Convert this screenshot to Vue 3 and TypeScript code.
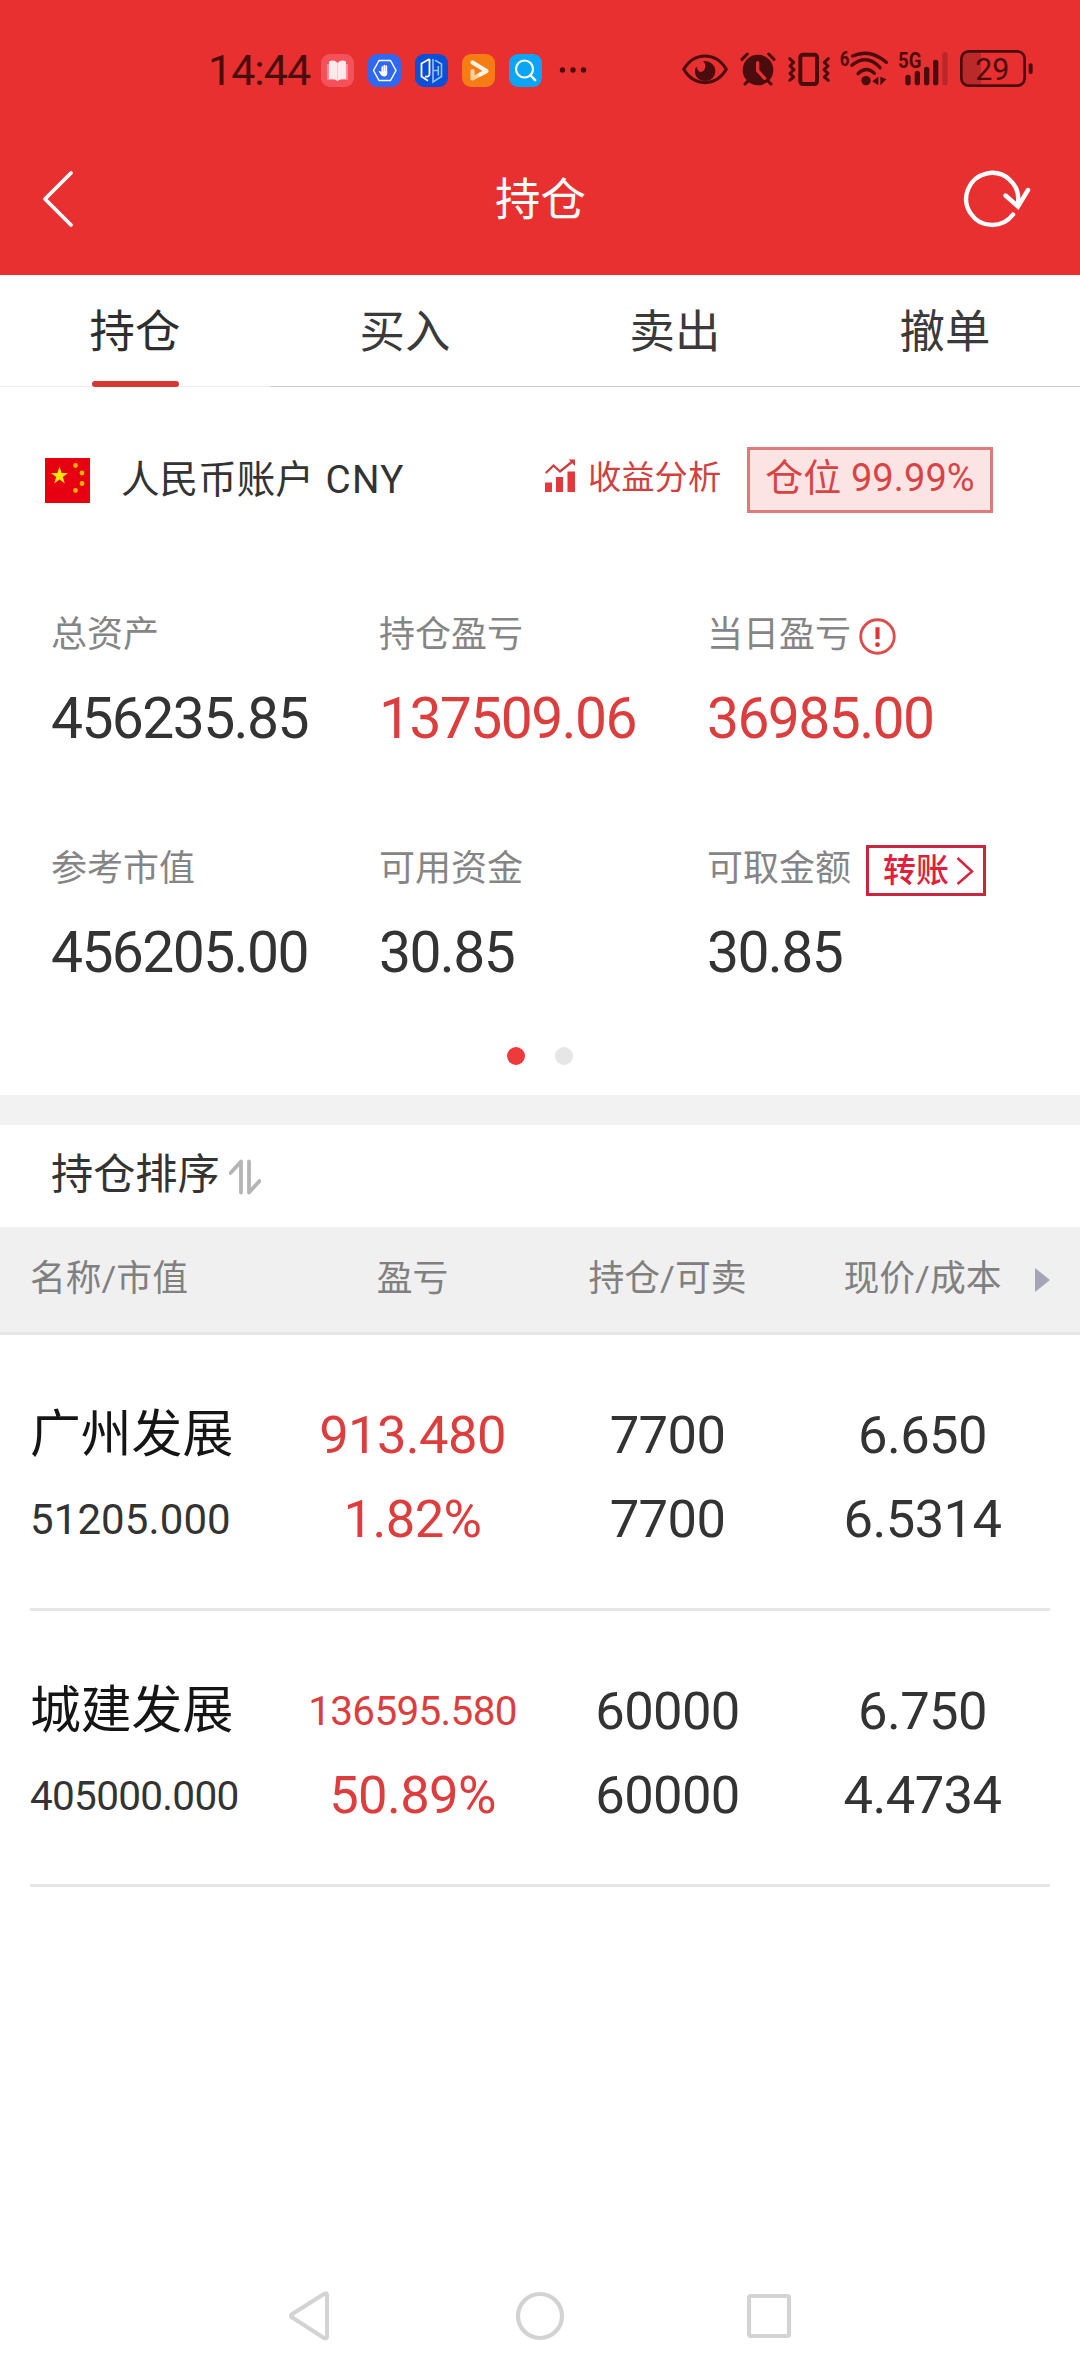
<script setup lang="ts">
interface Metric {
  label: string
  value: string
  up?: boolean
  extra?: 'info' | 'transfer'
}

interface Holding {
  name: string
  marketValue: string
  profit: string
  rate: string
  amount: string
  sellable: string
  price: string
  cost: string
}

const tabs: string[] = ['持仓', '买入', '卖出', '撤单']

const metrics: Metric[] = [
  { label: '总资产', value: '456235.85' },
  { label: '持仓盈亏', value: '137509.06', up: true },
  { label: '当日盈亏', value: '36985.00', up: true, extra: 'info' },
  { label: '参考市值', value: '456205.00' },
  { label: '可用资金', value: '30.85' },
  { label: '可取金额', value: '30.85', extra: 'transfer' },
]

const holdings: Holding[] = [
  {
    name: '广州发展',
    marketValue: '51205.000',
    profit: '913.480',
    rate: '1.82%',
    amount: '7700',
    sellable: '7700',
    price: '6.650',
    cost: '6.5314',
  },
  {
    name: '城建发展',
    marketValue: '405000.000',
    profit: '136595.580',
    rate: '50.89%',
    amount: '60000',
    sellable: '60000',
    price: '6.750',
    cost: '4.4734',
  },
]
</script>

<template>
  <div class="screen">
    <header class="top">
      <div class="status">
        <span class="clock">14:44</span>
        <div class="apps">
          <svg viewBox="0 0 33 33" class="app">
            <rect width="33" height="33" rx="9" fill="#f5515a" />
            <path d="M6 10h21v16H6z" fill="#fb8d92" />
            <path d="M8 7.500q5-2.500 8.500 1.500q3.500-4 8.500-1.500V25q-5-1-8.500 2q-3.500-3-8.500-2z" fill="#fdeaea" />
            <path d="M16.500 9V27" stroke="#f7cfd1" stroke-width="1" />
          </svg>
          <svg viewBox="0 0 33 33" class="app">
            <rect width="33" height="33" rx="9" fill="#2f68f2" />
            <path d="M11 6.500h11.500L28 16.500l-5.500 10H11l-5.500-10z" fill="none" stroke="#fff" stroke-width="1.500" stroke-linejoin="round" />
            <path d="M14.300 13v6M16.300 11.500v7M18.300 12v7" stroke="#fff" stroke-width="1.700" stroke-linecap="round" />
            <path d="M13.400 17.500h5.800v3q-.6 2-3 2q-2.500 0-3.600-2l-2-3.200q1-.9 2.800.9z" fill="#fff" />
          </svg>
          <svg viewBox="0 0 33 33" class="app">
            <rect width="33" height="33" rx="9" fill="#0a4fd8" />
            <path d="M14.500 5L6.500 9.500V22.500L13 26.800M14.500 5V20q0 3.200-4.500 2.500" fill="none" stroke="#fff" stroke-width="1.800" />
            <path d="M18 5V28L26.500 22.500V10L20 6.200M18 16.500h5.500M23.300 12v9.500" fill="none" stroke="#8fc2ff" stroke-width="1.600" />
          </svg>
          <svg viewBox="0 0 33 33" class="app">
            <rect width="33" height="33" rx="9" fill="#f67d13" />
            <path d="M10.500 17v7.500L24 17.500" fill="none" stroke="#ffcf9d" stroke-width="4.200" stroke-linecap="round" stroke-linejoin="round" />
            <path d="M10.500 8.500L24.500 17L18 20.500" fill="none" stroke="#fff4e6" stroke-width="4.200" stroke-linecap="round" stroke-linejoin="round" />
          </svg>
          <svg viewBox="0 0 33 33" class="app">
            <rect width="33" height="33" rx="9" fill="#0ca5f5" />
            <circle cx="15.500" cy="15" r="8.500" fill="none" stroke="#fff" stroke-width="2.200" />
            <path d="M21.500 21.500l4.700 4.700" stroke="#fff" stroke-width="2.400" stroke-linecap="round" />
          </svg>
        </div>
        <svg class="more" viewBox="0 0 28 8">
          <circle cx="3.500" cy="4" r="2.700" />
          <circle cx="14" cy="4" r="2.700" />
          <circle cx="24.500" cy="4" r="2.700" />
        </svg>

        <div class="system">
          <svg viewBox="60 48 150 144" width="50" height="48">
            <path d="M71 118C86 93 110 78 135 78S184 93 199 118C184 143 160 158 135 158S86 143 71 118Z" fill="none" stroke="#4b0c0e" stroke-width="9" />
            <path d="M129 93C150 91 166 105 166 123C166 141 152 153 136 153C118 153 104 141 105 123C105 117 107 113 110 110C112 123 121 129 128 124C138 118 139 102 129 93Z" fill="#4b0c0e" />
          </svg>
          <svg viewBox="237 48 114 144" width="38" height="48">
            <path d="M246 88L262 72M342 88L326 72M255 162L266 151M333 162L322 151" stroke="#4b0c0e" stroke-width="9" stroke-linecap="round" />
            <circle cx="294" cy="120" r="46" fill="#4b0c0e" />
            <path d="M293 98V122L314 145" fill="none" stroke="#e83030" stroke-width="10" stroke-linecap="round" />
          </svg>
          <svg viewBox="378 48 138 144" width="46" height="48">
            <rect x="421" y="74" width="50" height="88" rx="8" fill="none" stroke="#4b0c0e" stroke-width="12" />
            <path d="M389 86L401 97L390 108L402 119L390 130L401 141L389 151M505 86L493 97L504 108L492 119L504 130L493 141L505 151" fill="none" stroke="#4b0c0e" stroke-width="9" stroke-linejoin="round" stroke-linecap="round" />
          </svg>
          <svg viewBox="534 48 156 144" width="52" height="48">
            <text x="539" y="108" font-size="62" font-weight="700" textLength="29" lengthAdjust="spacingAndGlyphs" fill="#4b0c0e">6</text>
            <path d="M578 78Q630 55 679 97M576 106Q620 70 660 113M594 131Q618 107 643 130" fill="none" stroke="#4b0c0e" stroke-width="10" stroke-linecap="round" />
            <circle cx="618" cy="152" r="14" fill="#4b0c0e" />
            <path d="M655 140V166L637 154ZM661 140V166L679 148Z" fill="#4b0c0e" />
          </svg>
          <svg viewBox="708 48 162 144" width="54" height="48">
            <text x="714" y="113" font-size="64" font-weight="700" textLength="70" lengthAdjust="spacingAndGlyphs" fill="#4b0c0e">5G</text>
            <path d="M744 142V158M772 130V158M800 118V158M827 97V158" stroke="#4b0c0e" stroke-width="16" stroke-linecap="round" />
            <path d="M855 74V158" stroke="#ba2729" stroke-width="16" stroke-linecap="round" />
          </svg>
          <svg viewBox="894 48 228 144" width="76" height="48">
            <path d="M963 63H925Q903 63 903 85V145Q903 168 925 168H963Z" fill="#bb292b" />
            <rect x="904" y="64" width="190" height="103" rx="22" fill="none" stroke="#4b0c0e" stroke-width="8" />
            <rect x="1106" y="100" width="12" height="32" rx="6" fill="#4b0c0e" />
            <text x="946" y="150" font-size="96" textLength="102" lengthAdjust="spacingAndGlyphs" fill="#4b0c0e">29</text>
          </svg>
        </div>
      </div>

      <div class="titlebar">
        <svg class="back" viewBox="0 0 34 60">
          <path d="M31 4L5 30L31 56" fill="none" stroke="#fff" stroke-width="3.800" stroke-linecap="round" stroke-linejoin="round" />
        </svg>
        <h1>持仓</h1>
        <svg class="refresh" viewBox="0 0 70 62">
          <path d="M51 46.500A26 26 0 1 1 56 34" fill="none" stroke="#fff" stroke-width="4.400" stroke-linecap="round" />
          <path d="M43.500 27.500L56 38.500L66 22" fill="none" stroke="#fff" stroke-width="4.400" stroke-linecap="round" stroke-linejoin="miter" />
        </svg>
      </div>
    </header>

    <nav class="tabs">
      <div v-for="(tab, i) in tabs" :key="tab" class="tab" :class="{ active: i === 0 }">
        <span>{{ tab }}</span>
      </div>
    </nav>

    <section class="account">
      <div class="account-row">
        <svg class="flag" viewBox="0 0 45 45">
          <rect width="45" height="45" fill="#e60012" />
          <path d="M14.500 8.500l2.100 6.500h6.400l-5.200 4 2 6.600-5.300-4-5.300 4 2-6.600-5.200-4h6.400z" fill="#ffe600" />
          <g fill="#f5b400">
            <circle cx="30.500" cy="7.500" r="2.400" />
            <circle cx="37" cy="15" r="2.400" />
            <circle cx="37" cy="25.500" r="2.400" />
            <circle cx="30.500" cy="32.500" r="2.400" />
          </g>
        </svg>
        <span class="account-name">人民币账户 <span class="currency">CNY</span></span>
        <svg class="chart" viewBox="0 0 31 34">
          <path d="M0 23.500h7V33H0zM11 18h7V33h-7zM22.500 12.500h7.500V33h-7.500z" fill="#e23a3a" />
          <path d="M.8 14L8.500 6.500L15 12.500L28 2" fill="none" stroke="#d23c3c" stroke-width="2.300" />
          <path d="M23.500 .5H30V7z" fill="#d23c3c" />
        </svg>
        <span class="analysis">收益分析</span>
        <span class="position">仓位 99.99%</span>
      </div>

      <div class="metrics">
        <div v-for="m in metrics" :key="m.label" class="metric">
          <div class="metric-label">
            <span>{{ m.label }}</span>
            <svg v-if="m.extra === 'info'" class="info" viewBox="0 0 36 36">
              <circle cx="18" cy="18" r="16.300" fill="none" stroke="#dc4c4c" stroke-width="2.800" />
              <path d="M18 9V20.500" stroke="#e03535" stroke-width="4" />
              <circle cx="18" cy="26" r="2.300" fill="#e03535" />
            </svg>
            <span v-if="m.extra === 'transfer'" class="transfer">
              转账
              <svg viewBox="0 0 18 30" width="18" height="30">
                <path d="M1.500 2L16 15.500L1.500 28" fill="none" stroke="#d8243f" stroke-width="2.500" />
              </svg>
            </span>
          </div>
          <div class="metric-value" :class="{ up: m.up }">{{ m.value }}</div>
        </div>
      </div>

      <div class="pager">
        <i class="dot on"></i>
        <i class="dot"></i>
      </div>
    </section>

    <div class="sort">
      <span>持仓排序</span>
      <svg viewBox="0 0 32 36" width="32" height="36">
        <path d="M1.500 14L12 2.500V33.500M20 2.500V33.500L30.500 22" fill="none" stroke="#b5b5b5" stroke-width="3.800" stroke-linecap="round" stroke-linejoin="round" />
      </svg>
    </div>

    <div class="grid thead">
      <span class="first">名称/市值</span>
      <span>盈亏</span>
      <span>持仓/可卖</span>
      <span>现价/成本</span>
      <svg class="next" viewBox="0 0 15 24">
        <path d="M0 0L15 12L0 24Z" fill="#a5a5b6" />
      </svg>
    </div>

    <main class="list">
      <div v-for="h in holdings" :key="h.name" class="grid row">
        <div class="cell first">
          <span class="name">{{ h.name }}</span>
          <span class="market" :class="{ long: h.marketValue.length > 9 }">{{ h.marketValue }}</span>
        </div>
        <div class="cell up">
          <span :class="{ long: h.profit.length > 9 }">{{ h.profit }}</span>
          <span>{{ h.rate }}</span>
        </div>
        <div class="cell">
          <span>{{ h.amount }}</span>
          <span>{{ h.sellable }}</span>
        </div>
        <div class="cell">
          <span>{{ h.price }}</span>
          <span>{{ h.cost }}</span>
        </div>
      </div>
    </main>

    <footer class="sysnav">
      <svg viewBox="0 0 50 50">
        <path d="M5.500 24.500Q4.500 26 5.500 27L38 48Q41 49 41 46.500V5Q41 2.500 38 4Z" transform="translate(0 -1)" fill="none" stroke="#d3d3d3" stroke-width="4" stroke-linejoin="round" />
      </svg>
      <svg viewBox="0 0 50 50">
        <circle cx="25" cy="25" r="22" fill="none" stroke="#d3d3d3" stroke-width="4.200" />
      </svg>
      <svg viewBox="0 0 50 50">
        <rect x="5" y="5" width="40" height="40" rx="2" fill="none" stroke="#d3d3d3" stroke-width="4.200" />
      </svg>
    </footer>
  </div>
</template>

<style>
body {
  margin: 0;
  background: #fff;
}
</style>

<style scoped>
.screen {
  width: 1080px;
  height: 2376px;
  display: flex;
  flex-direction: column;
  overflow: hidden;
  background: #fff;
  color: #333;
  font-family: Roboto, 'Noto Sans CJK SC', sans-serif;
  white-space: nowrap;
}

svg {
  display: block;
  flex: none;
}

.top {
  height: 275px;
  flex: none;
  background: #e83030;
  display: flex;
  flex-direction: column;
}

.status {
  height: 140px;
  box-sizing: border-box;
  padding-left: 208px;
  display: flex;
  align-items: center;
}

.clock {
  width: 113px;
  font-size: 43px;
  line-height: 50px;
  letter-spacing: -1px;
  color: #4b0c0e;
}

.apps {
  display: flex;
  gap: 14px;
}

.app {
  width: 33px;
  height: 33px;
}

.more {
  width: 28px;
  height: 8px;
  margin-left: 17px;
  fill: #4b0c0e;
}

.system {
  display: flex;
  margin-left: 93px;
}

.system svg + svg {
  margin-left: 9px;
}

.system svg:nth-child(4),
.system svg:nth-child(5) {
  margin-left: 6px;
}

.system svg:nth-child(6) {
  margin-left: 8px;
}

.titlebar {
  height: 118px;
  padding: 0 48px 0 40px;
  display: flex;
  align-items: center;
  justify-content: space-between;
}

.back {
  width: 34px;
  height: 60px;
}

.titlebar h1 {
  margin: 4px 0 0 45px;
  font-size: 45.4px;
  line-height: 60px;
  font-weight: 400;
  color: #fff;
}

.refresh {
  width: 70px;
  height: 62px;
}

.tabs {
  height: 112px;
  flex: none;
  display: flex;
}

.tab {
  position: relative;
  flex: 1;
  height: 112px;
  box-sizing: border-box;
  border-bottom: 1px solid #ccc;
  font-size: 45.4px;
  line-height: 115px;
  text-align: center;
  color: #3a3a3a;
}

.tab.active {
  border-bottom-color: #ececec;
  color: #2e2e2e;
}

.tab.active::after {
  content: '';
  position: absolute;
  left: 92px;
  bottom: -1px;
  width: 87px;
  height: 6px;
  border-radius: 3px;
  background: #d83636;
}

.account {
  height: 708px;
  flex: none;
  box-sizing: border-box;
  padding-top: 60px;
}

.account-row {
  height: 66px;
  display: flex;
  align-items: center;
  padding-left: 45px;
}

.flag {
  width: 45px;
  height: 45px;
}

.account-name {
  width: 424px;
  margin-left: 31px;
  font-size: 38.6px;
  line-height: 60px;
  margin-bottom: 1px;
}

.currency {
  margin-left: 2px;
  letter-spacing: 1.3px;
}

.chart {
  width: 31px;
  height: 34px;
  margin-bottom: 8px;
}

.analysis {
  width: 159px;
  margin-left: 12px;
  margin-bottom: 4px;
  font-size: 33.3px;
  line-height: 50px;
  color: #d23f3f;
}

.position {
  width: 246px;
  height: 66px;
  box-sizing: border-box;
  border: 3px solid #dd7b7b;
  background: #fde4e4;
  font-size: 38px;
  letter-spacing: 0.1px;
  line-height: 57px;
  text-align: center;
  color: #d84444;
}

.metrics {
  margin: 97px 0 0 51px;
  display: grid;
  grid-template-columns: repeat(3, 328px);
  row-gap: 91px;
}

.metric-label {
  height: 50px;
  margin-bottom: 23px;
  display: flex;
  align-items: center;
  font-size: 36px;
  line-height: 51px;
  color: #858585;
}

.info {
  width: 37px;
  height: 37px;
  margin: 3px 0 0 8px;
}

.transfer {
  width: 120px;
  height: 51px;
  box-sizing: border-box;
  margin: 3px 0 0 15px;
  padding-left: 14px;
  border: 3px solid #c9263f;
  display: flex;
  align-items: center;
  gap: 7px;
  font-size: 33px;
  font-weight: 500;
  line-height: 45px;
  color: #e01f3d;
}

.metric-value {
  font-size: 57px;
  line-height: 71px;
  height: 70px;
  letter-spacing: -1.6px;
  color: #333;
}

.up,
.metric-value.up {
  color: #dc3e3e;
}

.pager {
  margin-top: 60px;
  padding-left: 507px;
  display: flex;
  gap: 30px;
}

.dot {
  width: 18px;
  height: 18px;
  border-radius: 50%;
  background: #e6e6e6;
}

.dot.on {
  background: #ee3a3a;
}

.sort {
  height: 132px;
  flex: none;
  box-sizing: border-box;
  border-top: 30px solid #f2f2f2;
  padding: 0 0 3px 51px;
  display: flex;
  align-items: center;
  font-size: 42.2px;
  line-height: 60px;
  color: #333;
}

.sort svg {
  margin: 4px 0 0 9px;
}

.grid {
  display: grid;
  grid-template-columns: 285px 255px 255px 255px;
}

.thead {
  position: relative;
  height: 108px;
  flex: none;
  box-sizing: border-box;
  border-bottom: 3px solid #e6e6e6;
  background: #f0f0f0;
  font-size: 35.8px;
  line-height: 105px;
  text-align: center;
  color: #808080;
}

.thead .first {
  padding-left: 30px;
  text-align: left;
}

.next {
  position: absolute;
  left: 1035px;
  top: 41px;
  width: 15px;
  height: 24px;
}

.row {
  position: relative;
  height: 276px;
}

.row::after {
  content: '';
  position: absolute;
  left: 30px;
  right: 30px;
  bottom: 0;
  height: 3px;
  background: #e6e6e6;
}

.cell {
  padding-top: 58px;
  display: flex;
  flex-direction: column;
  align-items: center;
  font-size: 52.5px;
  line-height: 84px;
  letter-spacing: -0.6px;
}

.cell.first {
  padding-left: 30px;
  align-items: flex-start;
}

.name {
  font-size: 50.8px;
  letter-spacing: 0;
  color: #151515;
}

.market {
  font-size: 42px;
  letter-spacing: 0.1px;
  position: relative;
  top: 1px;
}

.long {
  font-size: 40.5px;
  letter-spacing: -0.7px;
}

.sysnav {
  margin-top: auto;
  padding: 0 286px 35px;
  display: flex;
  justify-content: space-between;
}

.sysnav svg {
  width: 50px;
  height: 50px;
}
</style>
